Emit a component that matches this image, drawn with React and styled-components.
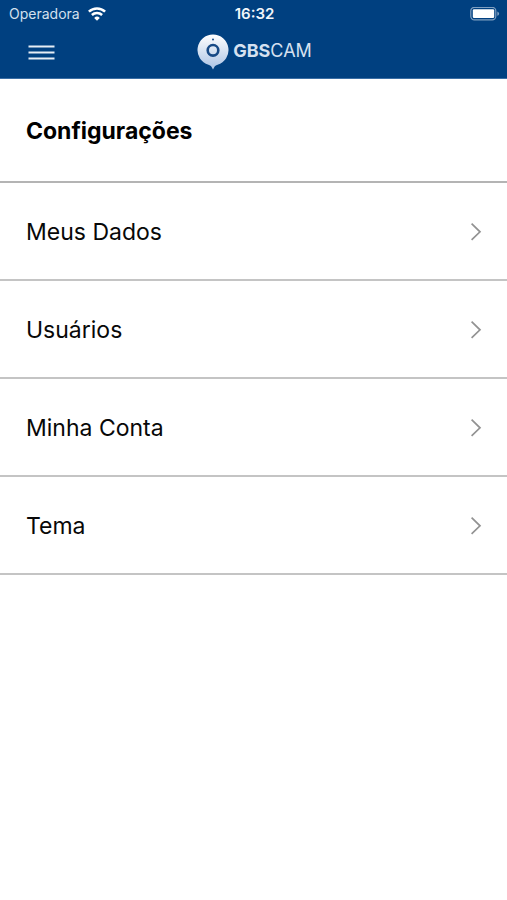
import React from "react";
import styled, { createGlobalStyle } from "styled-components";

const GlobalStyle = createGlobalStyle`
  *, *::before, *::after { box-sizing: border-box; }
  body {
    margin: 0;
    background: #ffffff;
    color: #080808;
    font-family: Inter, "Liberation Sans", sans-serif;
  }
`;

const Screen = styled.div`
  min-height: 100vh;
  background: #ffffff;
`;

const Header = styled.header`
  background: #004080;
  color: #ffffff;
  border-bottom: 1px solid #3a6ea5;
`;

const StatusBar = styled.div`
  display: grid;
  grid-template-columns: 1fr auto 1fr;
  align-items: center;
  height: 26px;
  padding: 2px 7px 0 9px;
  line-height: 20px;
`;

const Carrier = styled.span`
  display: flex;
  align-items: center;
  gap: 8px;
  font-size: 14px;
  color: #d3e0ee;
`;

const Clock = styled.time`
  font-size: 15px;
  font-weight: 600;
  color: #f2f6fa;
`;

const BatterySlot = styled.span`
  display: flex;
  justify-content: flex-end;
`;

const NavBar = styled.div`
  display: grid;
  grid-template-columns: 1fr auto 1fr;
  align-items: center;
  height: 52px;
  padding: 0 24px;
`;

const MenuButton = styled.button`
  display: flex;
  justify-self: start;
  padding: 4px;
  border: 0;
  background: transparent;
  color: #ffffff;
  cursor: pointer;
`;

const Brand = styled.div`
  display: flex;
  align-items: center;
  gap: 4px;
  padding-left: 2px;
`;

const BrandName = styled.span`
  padding-bottom: 2px;
  font-size: 18px;
  line-height: 24px;
  font-weight: 400;
  color: #d5e1f0;
`;

const BrandStrong = styled.strong`
  font-weight: 700;
`;

const TitleBar = styled.div`
  display: flex;
  align-items: center;
  height: 104px;
  padding: 2px 26px 0;
  border-bottom: 2px solid #b4b4b4;
`;

const Title = styled.h1`
  margin: 0;
  font-size: 23px;
  line-height: 32px;
  font-weight: 700;
  color: #000000;
`;

const Menu = styled.ul`
  margin: 0;
  padding: 0;
  list-style: none;
`;

const MenuRow = styled.a`
  display: flex;
  align-items: center;
  justify-content: space-between;
  height: 98px;
  padding: 2px 25px 0 26px;
  border-bottom: 2px solid #c4c4c4;
  color: #080808;
  font-size: 23px;
  line-height: 32px;
  text-decoration: none;
`;

const WifiIcon = () => (
  <svg width="18" height="15" viewBox="0 0 18 15" fill="none" stroke="#fff" strokeWidth="2.5" aria-hidden="true">
    <path d="M.9 4.7a11.6 11.6 0 0 1 16.2 0" />
    <path d="M3.9 8a7.3 7.3 0 0 1 10.2 0" />
    <path d="M9 13.8l-2.8-2.9a4 4 0 0 1 5.6 0z" fill="#fff" stroke="none" />
  </svg>
);

const BatteryIcon = () => (
  <svg width="30" height="14" viewBox="0 0 30 14" aria-hidden="true">
    <rect x=".8" y=".3" width="25" height="12.6" rx="3.6" fill="none" stroke="#7f9fc0" strokeWidth="1.2" />
    <rect x="2.8" y="2.2" width="21.4" height="8.8" rx="1.2" fill="#fff" />
    <path d="M27.3 4.4c2.4.8 2.4 3.6 0 4.4z" fill="#7f9fc0" />
  </svg>
);

const MenuIcon = () => (
  <svg width="27" height="16" viewBox="0 0 27 16" stroke="#e6edf5" strokeWidth="1.8" aria-hidden="true">
    <path d="M.5 2.5h26M.5 8.5h26M.5 14.5h26" />
  </svg>
);

const CameraPin = () => (
  <svg width="32" height="36" viewBox="0 0 32 36" aria-hidden="true">
    <defs>
      <linearGradient id="pin" x1="0" y1="0" x2="0" y2="1">
        <stop offset="0" stopColor="#ffffff" />
        <stop offset="1" stopColor="#a9c2e4" />
      </linearGradient>
    </defs>
    <path
      d="M16 .5a15.5 15.5 0 0 1 4.6 30.3c-1.8.6-2.7 1.1-3.2 2.2L16 35.6 14.6 33c-.5-1.1-1.4-1.6-3.2-2.2A15.5 15.5 0 0 1 16 .5z"
      fill="url(#pin)"
    />
    <circle cx="16" cy="16.3" r="5.3" fill="none" stroke="#174a86" strokeWidth="2.6" />
    <circle cx="16" cy="5.4" r="1" fill="#174a86" />
  </svg>
);

const Chevron = () => (
  <svg width="12" height="18" viewBox="0 0 12 18" fill="none" stroke="#929292" strokeWidth="1.7" aria-hidden="true">
    <path d="M1.6 .7L10 8.8l-8.4 8.1" />
  </svg>
);

const items = [
  { label: "Meus Dados", href: "#meus-dados" },
  { label: "Usuários", href: "#usuarios" },
  { label: "Minha Conta", href: "#minha-conta" },
  { label: "Tema", href: "#tema" },
];

export default function App() {
  return (
    <Screen>
      <GlobalStyle />
      <Header>
        <StatusBar>
          <Carrier>
            Operadora
            <WifiIcon />
          </Carrier>
          <Clock>16:32</Clock>
          <BatterySlot>
            <BatteryIcon />
          </BatterySlot>
        </StatusBar>
        <NavBar>
          <MenuButton type="button" aria-label="Menu">
            <MenuIcon />
          </MenuButton>
          <Brand>
            <CameraPin />
            <BrandName>
              <BrandStrong>GBS</BrandStrong>CAM
            </BrandName>
          </Brand>
        </NavBar>
      </Header>
      <main>
        <TitleBar>
          <Title>Configurações</Title>
        </TitleBar>
        <nav aria-label="Configurações">
          <Menu>
            {items.map((item) => (
              <li key={item.href}>
                <MenuRow href={item.href}>
                  {item.label}
                  <Chevron />
                </MenuRow>
              </li>
            ))}
          </Menu>
        </nav>
      </main>
    </Screen>
  );
}
